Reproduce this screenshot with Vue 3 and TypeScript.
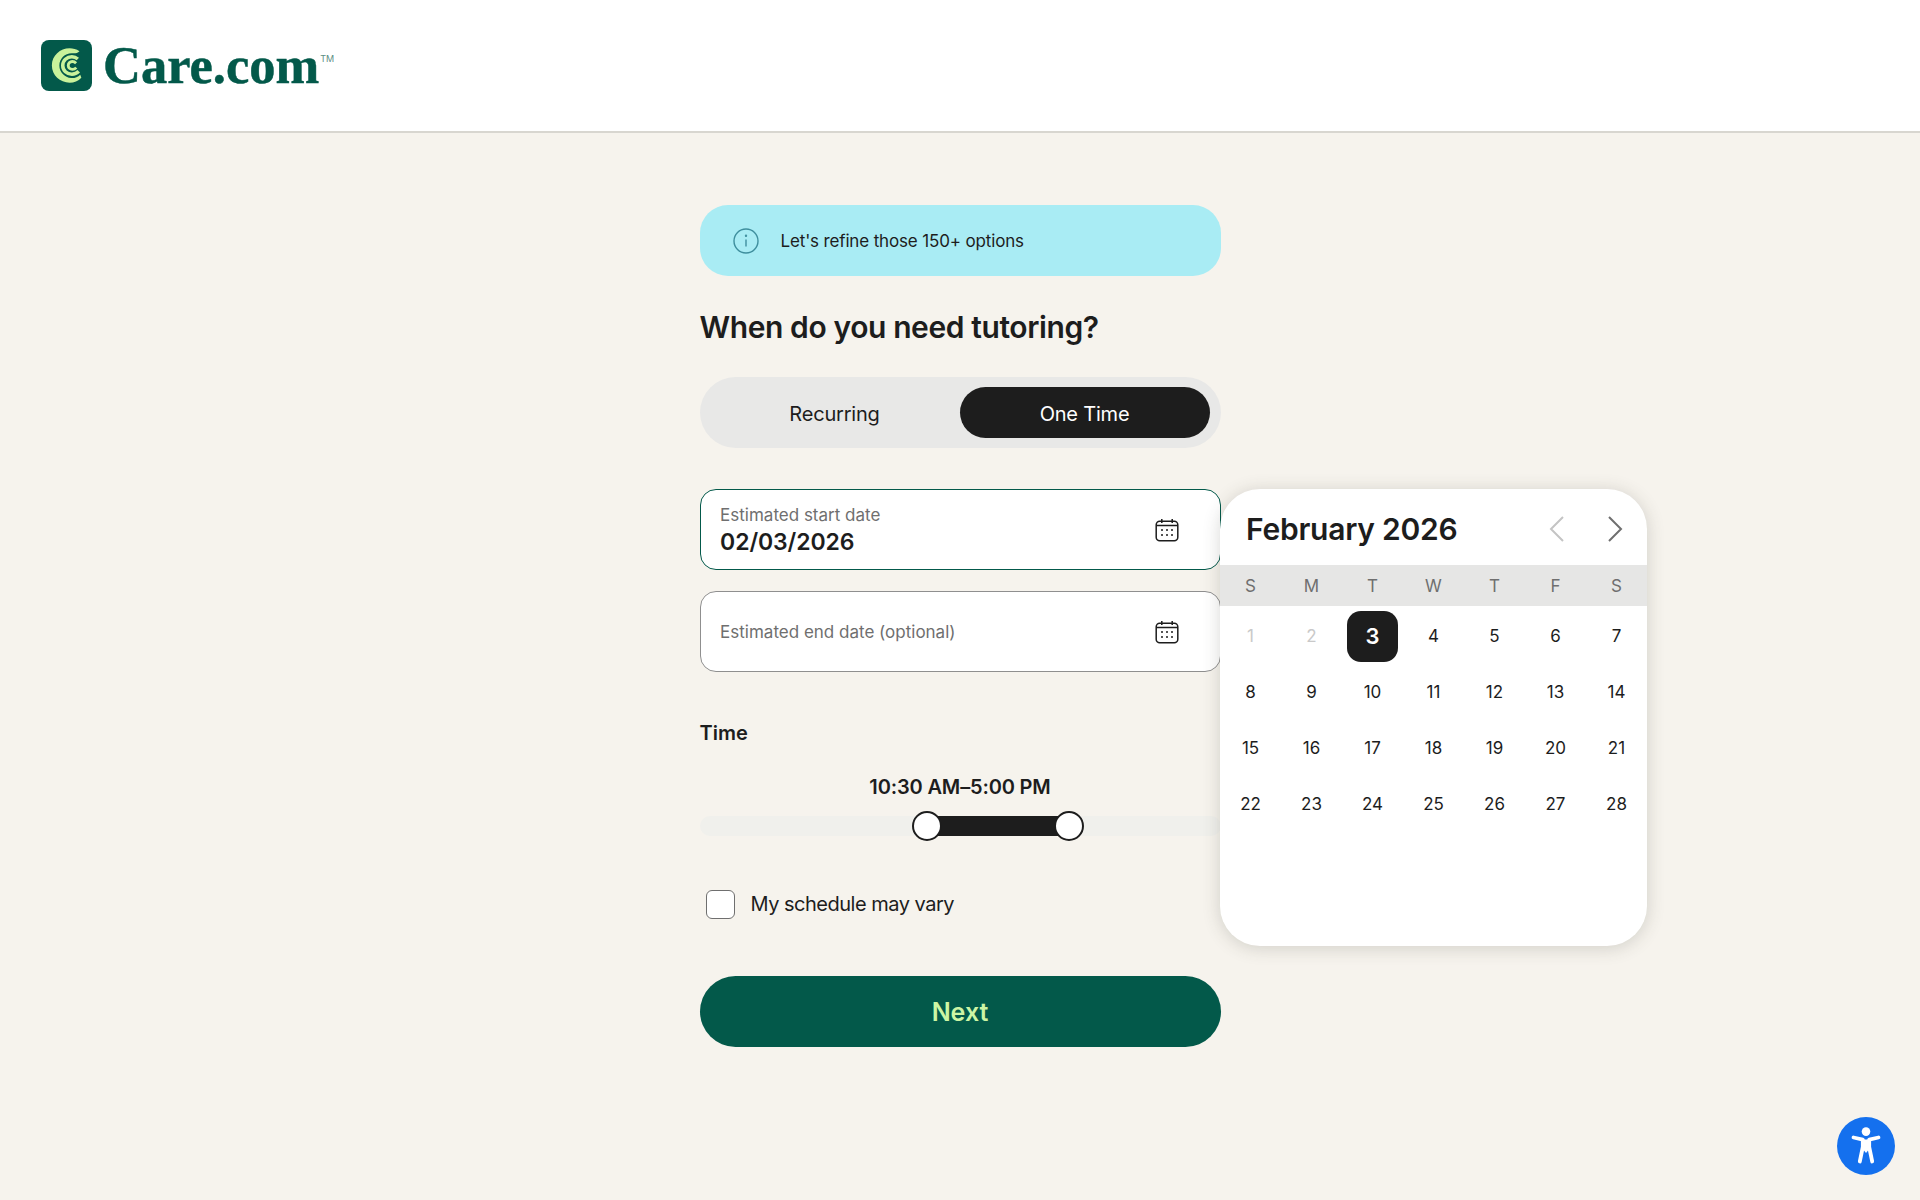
<script setup lang="ts">
// Tutoring schedule step: form column with the date picker popover open.
const weekdays = ['S', 'M', 'T', 'W', 'T', 'F', 'S']
const days = Array.from({ length: 28 }, (_, i) => i + 1)
const selectedDay = 3
const firstEnabled = 3

const range = { from: 43.65, to: 70.96 }
</script>

<template>
  <div class="page">
    <header class="top">
      <a class="logo">
        <span class="logo__mark">
          <svg viewBox="0 0 51 51" width="51" height="51" fill="none">
            <rect width="51" height="51" rx="8" fill="#03594a" />
            <g transform="translate(25.5 25.5) scale(1.1) translate(-25.7 -25.5)">
              <path d="M37.5 12.6C34.6 10.6 31.6 9.9 28.6 9.9 19.8 9.9 12.4 16.6 12.4 25.5 12.4 34.4 19.8 41.1 28.6 41.1 32.6 41.1 36.4 39.6 39.2 36.6L38.2 33.9C36 36.2 33 37.1 30 36.9 24 36.5 19.2 31.5 19.2 25.5 19.2 19.4 24.2 14.4 30.4 14.4 32.6 14.4 35.4 14.9 37.5 12.6Z" fill="#c9f29b" />
              <path d="M36 19.6C34.4 18.2 32.6 17.6 30.6 17.6 26 17.6 22.3 21 22.3 25.5 22.3 30 26 33.4 30.6 33.4 33 33.4 35.2 32.5 36.8 30.8" stroke="#c9f29b" stroke-width="3.2" />
              <path d="M34.4 23.4C33.4 22.4 32.2 21.9 31 21.9 29 21.9 27.3 23.4 27.3 25.5 27.3 27.5 29 29 31 29 32.4 29 33.6 28.5 34.6 27.4" stroke="#c9f29b" stroke-width="2.6" />
            </g>
          </svg>
        </span>
        <span class="logo__word">Care.com</span>
        <span class="logo__tm">TM</span>
      </a>
    </header>

    <main class="form">
      <div class="notice">
        <svg class="notice__icon" viewBox="0 0 26 26" width="26" height="26" fill="none" stroke="#3f8f9e" stroke-width="1.4">
          <circle cx="13" cy="13" r="12" />
          <path d="M13 11.5v7" />
          <circle cx="13" cy="7.8" r="0.5" fill="#3f8f9e" />
        </svg>
        <span>Let's refine those 150+ options</span>
      </div>

      <h1 class="title">When do you need tutoring?</h1>

      <div class="toggle">
        <button class="toggle__opt">Recurring</button>
        <button class="toggle__opt toggle__opt--on">One Time</button>
      </div>

      <div class="field field--focus">
        <div class="field__text">
          <span class="field__label">Estimated start date</span>
          <span class="field__value">02/03/2026</span>
        </div>
        <svg class="field__icon" viewBox="0 0 24 24" width="24" height="24" fill="none" stroke="#1d1d1d" stroke-width="1.5">
          <rect x="1.2" y="3.2" width="21.6" height="19.6" rx="3.5" />
          <path d="M1.2 7.6h21.6M6.8 1v4M17.2 1v4" />
          <g fill="#1d1d1d" stroke="none">
            <circle cx="7" cy="12" r="1" /><circle cx="12" cy="12" r="1" /><circle cx="17" cy="12" r="1" />
            <circle cx="7" cy="17" r="1" /><circle cx="12" cy="17" r="1" /><circle cx="17" cy="17" r="1" />
          </g>
        </svg>
      </div>

      <div class="field field--empty">
        <span class="field__label">Estimated end date (optional)</span>
        <svg class="field__icon" viewBox="0 0 24 24" width="24" height="24" fill="none" stroke="#1d1d1d" stroke-width="1.5">
          <rect x="1.2" y="3.2" width="21.6" height="19.6" rx="3.5" />
          <path d="M1.2 7.6h21.6M6.8 1v4M17.2 1v4" />
          <g fill="#1d1d1d" stroke="none">
            <circle cx="7" cy="12" r="1" /><circle cx="12" cy="12" r="1" /><circle cx="17" cy="12" r="1" />
            <circle cx="7" cy="17" r="1" /><circle cx="12" cy="17" r="1" /><circle cx="17" cy="17" r="1" />
          </g>
        </svg>
      </div>

      <h2 class="time-label">Time</h2>
      <div class="time-range">10:30 AM–5:00 PM</div>
      <div class="slider">
        <div class="slider__fill" :style="{ left: range.from + '%', width: range.to - range.from + '%' }"></div>
        <span class="slider__knob" :style="{ left: range.from + '%' }"></span>
        <span class="slider__knob" :style="{ left: range.to + '%' }"></span>
      </div>

      <label class="check">
        <span class="check__box"></span>
        <span>My schedule may vary</span>
      </label>

      <button class="next">Next</button>

      <section class="cal">
        <div class="cal__head">
          <span class="cal__month">February 2026</span>
          <div class="cal__nav">
            <svg viewBox="0 0 16 28" width="16" height="28" fill="none" stroke="#c4c4c4" stroke-width="2"><path d="M14 2 2 14l12 12" /></svg>
            <svg viewBox="0 0 16 28" width="16" height="28" fill="none" stroke="#6f6f6f" stroke-width="2"><path d="m2 2 12 12L2 26" /></svg>
          </div>
        </div>
        <div class="cal__week">
          <span v-for="(d, i) in weekdays" :key="i">{{ d }}</span>
        </div>
        <div class="cal__days">
          <span
            v-for="d in days"
            :key="d"
            class="cal__day"
            :class="{ 'cal__day--sel': d === selectedDay, 'cal__day--off': d < firstEnabled }"
          >
            <span>{{ d }}</span>
          </span>
        </div>
      </section>
    </main>

    <button class="a11y" aria-label="Accessibility">
      <svg viewBox="0 0 58 58" width="58" height="58" fill="none">
        <circle cx="29" cy="14.6" r="4.3" fill="#fff" />
        <path d="M16.5 20.5 25.8 22.6V30L22.8 44.5M41.5 20.5 32.2 22.6V30L35.2 44.5" stroke="#fff" stroke-width="3.8" stroke-linecap="round" stroke-linejoin="round" />
        <path d="M25 22.5h8V31l-4 5-4-5Z" fill="#fff" />
      </svg>
    </button>
  </div>
</template>

<style>
body { margin: 0; background: #f6f3ed; }
</style>

<style scoped>
.page {
  position: relative;
  min-height: 1200px;
  overflow: hidden;
  background: #f6f3ed;
  color: #1d1d1d;
  font-family: Inter, "Liberation Sans", sans-serif;
}

.top {
  display: flex;
  align-items: center;
  height: 131px;
  padding-left: 41px;
  background: #fff;
  border-bottom: 2px solid #d8d6d0;
}
.logo { display: flex; align-items: center; color: #03594a; }
.logo__mark { display: block; width: 51px; height: 51px; margin-right: 11px; }
.logo__mark svg { display: block; }
.logo__word {
  font-family: "Liberation Serif", serif;
  font-weight: 700;
  font-size: 52.5px;
  line-height: 51px;
  -webkit-text-stroke: 0.5px #03594a;
}
.logo__tm {
  align-self: flex-start;
  margin: 13px 0 0 1px;
  font-size: 9px;
  line-height: 12px;
  color: #5d8f84;
}

.form {
  position: relative;
  width: 521px;
  margin: 0 auto;
  padding-top: 72px;
}

.notice {
  display: flex;
  align-items: center;
  height: 71px;
  padding-left: 33px;
  border-radius: 28px;
  background: #a9ecf4;
  font-size: 17px;
  letter-spacing: -0.15px;
}
.notice__icon { margin-right: 22px; }

.title {
  margin: 32px 0 31px;
  font-size: 30px;
  line-height: 38px;
  font-weight: 600;
  letter-spacing: -0.4px;
}

.toggle {
  display: grid;
  grid-template-columns: 1fr 250px;
  height: 71px;
  padding: 10px 11px 10px 10px;
  box-sizing: border-box;
  border-radius: 36px;
  background: #e8e8e7;
}
.toggle__opt {
  border: 0;
  padding: 2px 0 0;
  border-radius: 26px;
  background: none;
  color: #1d1d1d;
  font: 400 20px Inter, "Liberation Sans", sans-serif;
  letter-spacing: -0.2px;
}
.toggle__opt--on { background: #1d1d1d; color: #fff; }

.field {
  display: flex;
  align-items: center;
  justify-content: space-between;
  box-sizing: border-box;
  height: 81px;
  padding: 0 20px 0 19.6px;
  border: 1px solid #8f8f8f;
  border-radius: 16px;
  background: #fff;
}
.field--focus { margin-top: 41px; border-color: #03594a; }
.field--empty { margin-top: 21px; }
.field__text { display: flex; flex-direction: column; gap: 2px; padding-top: 1px; }
.field__label { font-size: 17px; line-height: 22px; color: #6f6f6f; }
.field__value { font-size: 23px; line-height: 29px; font-weight: 600; letter-spacing: -0.1px; }
.field__icon { margin-right: 21px; }

.time-label {
  margin: 47px 0 0;
  font-size: 20px;
  line-height: 28px;
  font-weight: 600;
}
.time-range {
  margin-top: 26px;
  text-align: center;
  font-size: 20px;
  line-height: 28px;
  font-weight: 600;
  letter-spacing: -0.15px;
}
.slider {
  position: relative;
  height: 20px;
  margin-top: 15px;
  border-radius: 10px;
  background: #f0f0ec;
}
.slider__fill { position: absolute; top: 0; bottom: 0; background: #1d1d1d; }
.slider__knob {
  position: absolute;
  top: 50%;
  width: 30px;
  height: 30px;
  box-sizing: border-box;
  border: 2px solid #1d1d1d;
  border-radius: 50%;
  background: #fff;
  transform: translate(-50%, -50%);
}

.check {
  display: flex;
  align-items: center;
  gap: 16px;
  margin: 53px 0 0 6px;
  height: 30px;
  font-size: 20px;
  letter-spacing: -0.5px;
}
.check__box {
  width: 29px;
  height: 29px;
  box-sizing: border-box;
  border: 1px solid #6f6f6f;
  border-radius: 6px;
  background: #fff;
}

.next {
  display: block;
  width: 100%;
  height: 71px;
  margin-top: 57px;
  border: 0;
  border-radius: 36px;
  background: #03594a;
  color: #cdf5a4;
  font: 600 25px Inter, "Liberation Sans", sans-serif;
}

.cal {
  position: absolute;
  left: 520.5px;
  top: 356px;
  width: 427px;
  height: 457px;
  border-radius: 40px;
  background: #fff;
  box-shadow: 0 2px 18px rgba(60, 60, 50, 0.2);
}
.cal__head {
  display: flex;
  align-items: center;
  justify-content: space-between;
  height: 76px;
  padding: 4px 24px 0 26px;
  box-sizing: border-box;
}
.cal__month { font-size: 30px; font-weight: 600; letter-spacing: -0.25px; }
.cal__nav { display: flex; gap: 42px; }
.cal__week {
  display: grid;
  grid-template-columns: repeat(7, 61px);
  height: 41px;
  align-items: center;
  text-align: center;
  background: #e6e6e5;
  color: #6f6f6f;
  font-size: 17px;
}
.cal__days {
  display: grid;
  grid-template-columns: repeat(7, 61px);
  grid-auto-rows: 56px;
  padding-top: 2px;
  font-size: 17px;
}
.cal__day { display: flex; align-items: center; justify-content: center; }
.cal__day--off { color: #c9c9c9; }
.cal__day--sel span {
  display: flex;
  align-items: center;
  justify-content: center;
  width: 51px;
  height: 51px;
  border-radius: 14px;
  background: #1d1d1d;
  color: #fff;
  font-size: 22px;
  font-weight: 600;
}

.a11y {
  position: absolute;
  left: 1837px;
  top: 1117px;
  width: 58px;
  height: 58px;
  padding: 0;
  border: 0;
  border-radius: 50%;
  background: #1470ee;
}
.a11y svg { display: block; }
</style>
